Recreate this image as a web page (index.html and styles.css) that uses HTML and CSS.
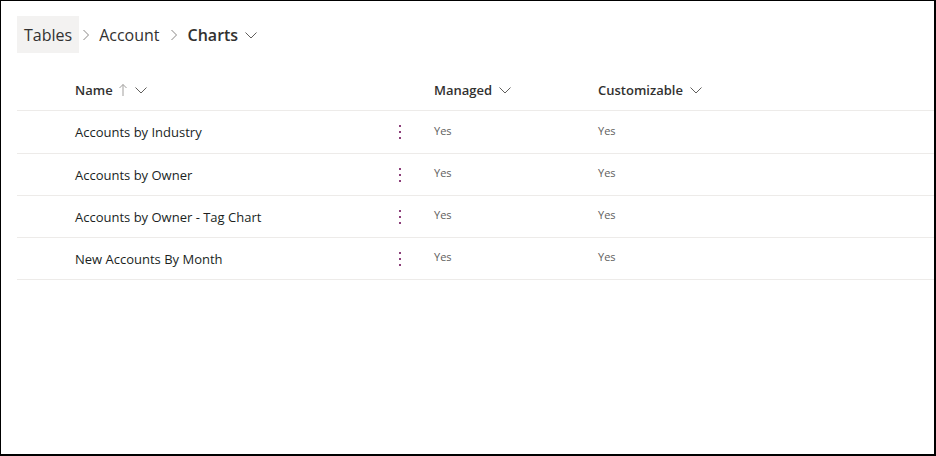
FILE: index.html
```html
<!DOCTYPE html>
<html>
<head>
<meta charset="utf-8">
<link rel="stylesheet" href="styles.css">
</head>
<body>
<div class="frame">
  <nav class="breadcrumb">
    <span class="crumb crumb-first">Tables</span>
    <svg class="sep" width="12" height="14" viewBox="0 0 12 14"><path d="M3.5 2 L8.5 7 L3.5 12" fill="none" stroke="#8a8886" stroke-width="1"/></svg>
    <span class="crumb">Account</span>
    <svg class="sep" width="12" height="14" viewBox="0 0 12 14"><path d="M3.5 2 L8.5 7 L3.5 12" fill="none" stroke="#8a8886" stroke-width="1"/></svg>
    <span class="crumb crumb-current">Charts</span>
    <svg class="drop" width="14" height="10" viewBox="0 0 14 10"><path d="M1.5 2.5 L7 8 L12.5 2.5" fill="none" stroke="#605e5c" stroke-width="1"/></svg>
  </nav>

  <div class="table">
    <div class="row head">
      <div class="cell name">Name
        <svg class="arrow" width="10" height="14" viewBox="0 0 10 14"><path d="M5 13 V1.5 M1.5 5 L5 1.5 L8.5 5" fill="none" stroke="#a19f9d" stroke-width="1"/></svg>
        <svg class="hchev" width="14" height="10" viewBox="0 0 14 10"><path d="M1.5 2.5 L7 8 L12.5 2.5" fill="none" stroke="#605e5c" stroke-width="1"/></svg>
      </div>
      <div class="cell"></div>
      <div class="cell col">Managed
        <svg class="hchev" width="14" height="10" viewBox="0 0 14 10"><path d="M1.5 2.5 L7 8 L12.5 2.5" fill="none" stroke="#605e5c" stroke-width="1"/></svg>
      </div>
      <div class="cell col">Customizable
        <svg class="hchev" width="14" height="10" viewBox="0 0 14 10"><path d="M1.5 2.5 L7 8 L12.5 2.5" fill="none" stroke="#605e5c" stroke-width="1"/></svg>
      </div>
    </div>

    <div class="row first">
      <div class="cell name">Accounts by Industry</div>
      <div class="cell menu"><span class="dots"><i></i><i></i><i></i></span></div>
      <div class="cell col val">Yes</div>
      <div class="cell col val">Yes</div>
    </div>
    <div class="row">
      <div class="cell name">Accounts by Owner</div>
      <div class="cell menu"><span class="dots"><i></i><i></i><i></i></span></div>
      <div class="cell col val">Yes</div>
      <div class="cell col val">Yes</div>
    </div>
    <div class="row">
      <div class="cell name">Accounts by Owner - Tag Chart</div>
      <div class="cell menu"><span class="dots"><i></i><i></i><i></i></span></div>
      <div class="cell col val">Yes</div>
      <div class="cell col val">Yes</div>
    </div>
    <div class="row">
      <div class="cell name">New Accounts By Month</div>
      <div class="cell menu"><span class="dots"><i></i><i></i><i></i></span></div>
      <div class="cell col val">Yes</div>
      <div class="cell col val">Yes</div>
    </div>
  </div>
</div>
</body>
</html>
```

FILE: styles.css
```css
html, body {
  margin: 0;
  padding: 0;
  background: #fff;
}
body {
  width: 936px;
  height: 456px;
  box-sizing: border-box;
  border-left: 1px solid #000;
  border-top: 1px solid #000;
  border-right: 2px solid #000;
  border-bottom: 2px solid #000;
  font-family: "Open Sans", "Noto Sans", sans-serif;
  color: #201f1e;
  overflow: hidden;
}
.frame {
  padding: 15px 0 0 16px;
}
.breadcrumb {
  display: flex;
  align-items: center;
  height: 37px;
}
.crumb {
  font-size: 16px;
  color: #323130;
  padding: 1px 7px 0;
  line-height: 36px;
}
.crumb-first {
  background: #f3f2f1;
}
.sep {
  margin: 0 0 0 1px;
}
.crumb-current {
  font-weight: 600;
  padding-left: 8px;
  padding-right: 6px;
}
.table {
  margin-top: 16px;
}
.row {
  display: grid;
  grid-template-columns: 373px 20px 164px 1fr;
  height: 42px;
  border-bottom: 1px solid #edebe9;
  align-items: center;
  box-sizing: border-box;
}
.row.first {
  height: 43px;
}
.cell {
  display: flex;
  align-items: center;
  white-space: nowrap;
}
.name {
  padding-left: 58px;
  font-size: 13px;
  color: #201f1e;
}
.head .cell {
  font-size: 13px;
  font-weight: 600;
  color: #323130;
}
.arrow {
  margin-left: 5px;
}
.hchev {
  margin-left: 6px;
}
.col {
  padding-left: 24px;
}
.val {
  font-size: 11px;
  color: #605e5c;
  margin-top: -4px;
}
.menu {
  justify-content: center;
}
.dots {
  display: flex;
  flex-direction: column;
  gap: 4px;
}
.dots i {
  display: block;
  width: 2px;
  height: 2px;
  background: #8c3f7a;
}
```
